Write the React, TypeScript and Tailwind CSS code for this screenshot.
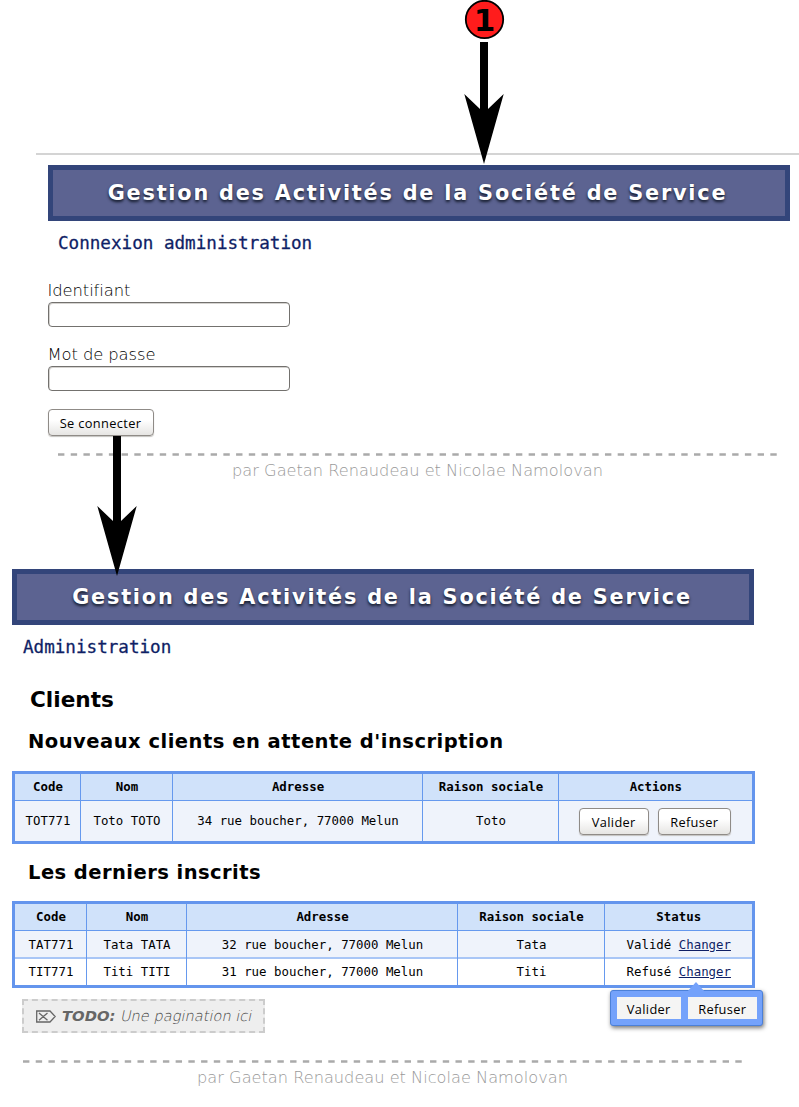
import type { ReactNode } from "react";

function Banner() {
  return (
    <h1 className="box-border flex h-[56px] w-[742px] items-center justify-center border-[5px] border-[#33457a] bg-[#5c6391] pr-[2px] font-['DejaVu_Sans'] text-[20.8px] leading-none font-bold tracking-[1.8px] whitespace-nowrap text-white [text-shadow:0_2px_3px_#111827]">
      Gestion des Activités de la Société de Service
    </h1>
  );
}

function PageTitle({ children }: { children: ReactNode }) {
  return (
    <h2 className="h-[22px] font-['DejaVu_Sans_Mono'] text-[17.6px] leading-[22px] whitespace-nowrap text-[#0f1f66] [-webkit-text-stroke:0.3px_#0f1f66]">
      {children}
    </h2>
  );
}

function Footer() {
  return (
    <footer className="w-[720px]">
      <svg className="block" width="720" height="3" viewBox="0 0 720 3">
        <line x1="0" y1="1.5" x2="720" y2="1.5" stroke="#aaaaaa" strokeWidth="2.4" strokeDasharray="6.4 6.32" />
      </svg>
      <p className="mt-[3px] text-center font-['DejaVu_Sans'] text-[16.2px] leading-[24px] font-extralight text-[#999999]">
        par Gaetan Renaudeau et Nicolae Namolovan
      </p>
    </footer>
  );
}

function Field({ label, type }: { label: string; type: string }) {
  return (
    <label className="block h-[64px] font-['DejaVu_Sans'] text-[16.4px] leading-[24px] font-extralight text-black">
      <span className="relative top-px -tracking-[0.1px] [font-variant-ligatures:common-ligatures]">{label}</span>
      <input
        type={type}
        className="block h-[25px] w-[242px] rounded-[4px] border border-[#73716e] bg-white shadow-[inset_1px_1px_0_#d5d3d0] outline-none"
      />
    </label>
  );
}

function Button({ children, className }: { children: ReactNode; className: string }) {
  return (
    <button
      className={`rounded-[4px] border border-[#8f8b87] bg-linear-to-b from-white from-40% to-[#e6e5e3] pt-[3px] text-center font-['Open_Sans'] text-[12.8px] tracking-[0.35px] text-black shadow-[0_1px_1px_#c4c2bf] ${className}`}
    >
      {children}
    </button>
  );
}

function Arrow({ className, shaft }: { className: string; shaft: number }) {
  const tip = shaft + 70;
  return (
    <svg className={`absolute ${className}`} width="40" height={tip} viewBox={`0 0 40 ${tip}`}>
      <path d={`M16 0H24V${shaft + 15}L39.7 ${shaft}L20 ${tip}L0.3 ${shaft}L16 ${shaft + 15}Z`} />
    </svg>
  );
}

function Cell({ children, last, head }: { children: ReactNode; last?: boolean; head?: boolean }) {
  return (
    <div
      className={`flex items-center justify-center whitespace-nowrap border-[#6699ee] pl-px ${last ? "" : "border-r"} ${head ? "border-b bg-[#d0e2fa] font-bold" : ""}`}
    >
      {children}
    </div>
  );
}

function ChangeLink() {
  return <a className="text-[#0f1f66] underline">Changer</a>;
}

export default function App() {
  return (
    <main className="relative h-[1107px] w-[799px] overflow-hidden bg-white text-black">
      <section className="pt-[153px]">
        <div className="ml-[36px] h-[2px] bg-[#d4d4d4]" />
        <div className="pt-[10px] pl-[47.5px]">
          <Banner />
          <div className="pt-[11px] pl-[10.5px]">
            <PageTitle>Connexion administration</PageTitle>
          </div>
          <form className="pt-[24px]">
            <Field label="Identifiant" type="text" />
            <Field label="Mot de passe" type="password" />
            <Button className="mt-[3px] block h-[27px] w-[106px]">Se connecter</Button>
          </form>
          <div className="pt-[17px] pl-[10px]">
            <Footer />
          </div>
        </div>
      </section>

      <section className="pt-[86px] pl-[12px]">
        <Banner />
        <div className="pt-[11px] pl-[11px]">
          <PageTitle>Administration</PageTitle>
        </div>
        <h2 className="mt-[27px] pl-[18px] font-['DejaVu_Sans'] text-[21.6px] leading-[30px] font-bold">Clients</h2>
        <h3 className="mt-[12px] pl-[16px] font-['DejaVu_Sans'] text-[19.5px] leading-[30px] font-bold tracking-[0.5px] whitespace-nowrap">
          Nouveaux clients en attente d&apos;inscription
        </h3>

        <div className="mt-[14px] grid h-[73px] w-[742.5px] grid-cols-[66px_92px_250px_136px_1fr] grid-rows-[27px_1fr] border-[3px] border-[#6495ed] bg-[#eff3fb] font-['DejaVu_Sans_Mono'] text-[12.4px]">
          <Cell head>Code</Cell>
          <Cell head>Nom</Cell>
          <Cell head>Adresse</Cell>
          <Cell head>Raison sociale</Cell>
          <Cell head last>Actions</Cell>
          <Cell>TOT771</Cell>
          <Cell>Toto TOTO</Cell>
          <Cell>34 rue boucher, 77000 Melun</Cell>
          <Cell>Toto</Cell>
          <Cell last>
            <div className="flex gap-[9px] pr-[2px]">
              <Button className="h-[27px] w-[70px]">Valider</Button>
              <Button className="h-[27px] w-[73px]">Refuser</Button>
            </div>
          </Cell>
        </div>

        <h3 className="mt-[14px] pl-[16px] font-['DejaVu_Sans'] text-[19.5px] leading-[30px] font-bold tracking-[0.45px] whitespace-nowrap">
          Les derniers inscrits
        </h3>

        <div className="mt-[13px] grid h-[87px] w-[742.5px] grid-cols-[72px_100px_271px_147px_1fr] grid-rows-[27px_28px_1fr] border-[3px] border-[#6495ed] bg-[linear-gradient(#eff3fb_53px,#a9c6f6_53px_55px,white_55px)] font-['DejaVu_Sans_Mono'] text-[12.4px]">
          <Cell head>Code</Cell>
          <Cell head>Nom</Cell>
          <Cell head>Adresse</Cell>
          <Cell head>Raison sociale</Cell>
          <Cell head last>Status</Cell>
          <Cell>TAT771</Cell>
          <Cell>Tata TATA</Cell>
          <Cell>32 rue boucher, 77000 Melun</Cell>
          <Cell>Tata</Cell>
          <Cell last>
            <span>Validé <ChangeLink /></span>
          </Cell>
          <Cell>TIT771</Cell>
          <Cell>Titi TITI</Cell>
          <Cell>31 rue boucher, 77000 Melun</Cell>
          <Cell>Titi</Cell>
          <Cell last>
            <span>Refusé <ChangeLink /></span>
          </Cell>
        </div>

        <div className="mt-[11px] ml-[10px] flex h-[34px] w-[243px] items-center border-2 border-dashed border-[#cccccc] bg-[#eeeeee] pl-[12px] font-['DejaVu_Sans'] text-[14.8px] whitespace-nowrap text-[#666666]">
          <svg width="20" height="13" viewBox="0 0 20 13" fill="none" stroke="#666666" strokeWidth="1.3">
            <path d="M.7 1H14L19.2 6.5L14 12H.7ZM3 3L11.5 10.2M11.5 3L3 10.2" />
          </svg>
          <b className="ml-[6px] italic">TODO:</b>
          <span className="ml-[6px] inline-block -skew-x-12 text-[14.6px] font-extralight text-[#444444]">Une pagination ici</span>
        </div>
        <div className="pt-[27px] pl-[10.5px]">
          <Footer />
        </div>
      </section>

      <div className="absolute top-[990px] left-[610px] flex h-[36px] w-[153px] gap-[7px] rounded-[3px] border border-[#4b80d8] bg-[#74a2fb] p-[5.5px] font-['Open_Sans'] text-[12.8px] tracking-[0.35px] shadow-[1px_2px_4px_#777777]">
        <svg className="absolute -top-[9px] left-[76px]" width="18" height="10" viewBox="0 0 18 10">
          <path d="M0 10L9 0L18 10Z" fill="#74a2fb" />
        </svg>
        <button className="h-[22px] w-[65px] bg-[#f5f5f4] pt-[3px]">Valider</button>
        <button className="h-[22px] w-[69px] bg-[#f5f5f4] pt-[3px]">Refuser</button>
      </div>

      <svg className="absolute top-0 left-[464px]" width="41" height="40" viewBox="0 0 41 40">
        <circle cx="20.5" cy="19.5" r="18.7" fill="#ff1c1c" stroke="black" strokeWidth="1.8" />
        <text x="20.5" y="31" textAnchor="middle" fontFamily="DejaVu Sans" fontWeight="bold" fontSize="31">1</text>
      </svg>
      <Arrow className="top-[42px] left-[464.3px]" shaft={52} />
      <Arrow className="top-[436px] left-[97.3px]" shaft={70} />
    </main>
  );
}
